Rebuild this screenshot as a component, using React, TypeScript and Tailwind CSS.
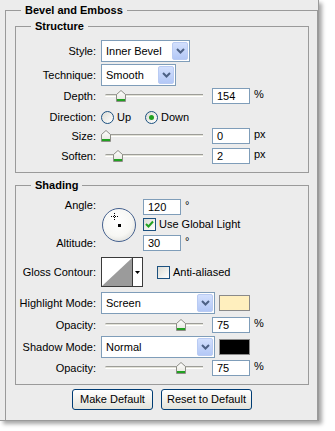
import React from "react";

const Chevron = () => (
  <svg width="9" height="6" viewBox="0 0 9 6">
    <path d="M1 1 L4.5 4.5 L8 1" fill="none" stroke="#4d6185" strokeWidth="2" />
  </svg>
);

function Select({ value, w }: { value: string; w: string }) {
  return (
    <div className={`${w} h-[22px] flex items-center border border-[#7f9db9] bg-white`}>
      <span className="flex-1 pl-[4px] pt-[1px] text-[11px] text-black">{value}</span>
      <span className="mr-[1px] flex h-[18px] w-[16px] items-center justify-center rounded-[2px] border border-[#b9cbf3] bg-gradient-to-b from-[#d3e0fd] to-[#b3c8f6]">
        <Chevron />
      </span>
    </div>
  );
}

function Field({ value, unit }: { value: string; unit: string }) {
  return (
    <div className="flex items-center">
      <div className="flex h-[16px] w-[38px] items-center border border-[#7f9db9] bg-white pl-[4px] text-[11px]">
        {value}
      </div>
      <span className="ml-[4px] -mt-[4px] text-[11px]">{unit}</span>
    </div>
  );
}

function Thumb() {
  return (
    <svg width="10" height="12" viewBox="0 0 10 12">
      <defs>
        <linearGradient id="tg" x1="0" y1="0" x2="0" y2="1">
          <stop offset="0" stopColor="#ffffff" />
          <stop offset="1" stopColor="#e4e4dc" />
        </linearGradient>
      </defs>
      <path d="M0.5 4.5 L5 0.5 L9.5 4.5 L9.5 11.5 L0.5 11.5 Z" fill="url(#tg)" stroke="#8d8d86" />
      <rect x="1" y="9" width="8" height="2" fill="#21a121" />
    </svg>
  );
}

function Slider({ at }: { at: number }) {
  return (
    <div className="relative h-[16px] w-[105px]">
      <div className="absolute left-[4px] right-[3px] top-[6px] h-[3px] rounded-l-full border-t border-[#9d9d98] border-b border-b-white bg-[#e2e2d8]" />
      <div className="absolute top-[2px]" style={{ left: at }}>
        <Thumb />
      </div>
    </div>
  );
}

function Label({ children }: { children: React.ReactNode }) {
  return <span className="w-[80px] shrink-0 text-right text-[11px]">{children}</span>;
}

function Row({ label, className, children }: { label: string; className: string; children: React.ReactNode }) {
  return (
    <div className={`flex items-center ${className}`}>
      <Label>{label}</Label>
      <div className="ml-[5px] flex items-center">{children}</div>
    </div>
  );
}

function SliderRow({ label, at, value, unit, className }: { label: string; at: number; value: string; unit: string; className: string }) {
  return (
    <Row label={label} className={`h-[16px] ${className}`}>
      <Slider at={at} />
      <div className="ml-[6px]">
        <Field value={value} unit={unit} />
      </div>
    </Row>
  );
}

function Radio({ on }: { on?: boolean }) {
  return (
    <span className="flex h-[13px] w-[13px] items-center justify-center rounded-full border border-[#1c5180] bg-gradient-to-br from-[#dcdcd5] to-white">
      {on && <span className="h-[5px] w-[5px] rounded-full bg-[#21a121]" />}
    </span>
  );
}

function Check({ on }: { on?: boolean }) {
  return (
    <span className="flex h-[13px] w-[13px] items-center justify-center border border-[#1c5180] bg-gradient-to-br from-[#dcdcd5] to-white">
      {on && (
        <svg width="9" height="9" viewBox="0 0 9 9">
          <path d="M1 4 L3.5 6.5 L8 1.5" fill="none" stroke="#21a121" strokeWidth="2" />
        </svg>
      )}
    </span>
  );
}

function Swatch({ color }: { color: string }) {
  return <span className={`ml-[4px] h-[16px] w-[31px] border border-[#8a8a8a] ${color}`} />;
}

function Button({ children, w }: { children: React.ReactNode; w: string }) {
  return (
    <button className={`${w} h-[21px] rounded-[3px] border border-[#003c74] bg-gradient-to-b from-white to-[#e3e3db] text-[11px] text-black`}>
      {children}
    </button>
  );
}

export default function App() {
  return (
    <div className="min-h-[431px] w-[335px] bg-white font-['Liberation_Sans',Arial,sans-serif] text-[11px] text-black">
      <div className="h-[421px] w-[319px] border-b border-r border-[#9a9a9a] bg-[#ececec] pl-[5px] pt-[3px] shadow-[3px_3px_4px_rgba(0,0,0,0.35)]">
        <fieldset className="w-[313px] border border-[#9a9a9a]">
          <legend className="ml-[15px] px-[4px] text-[11px] font-bold leading-[14px]">Bevel and Emboss</legend>
          <div className="pl-[9px] pr-[8px] pt-[2px]">
            {/* Structure */}
            <fieldset className="border border-[#9a9a9a]">
              <legend className="ml-[15px] px-[4px] text-[11px] font-bold leading-[14px]">Structure</legend>
              <div className="pb-[8px] pt-[7px]">
                <Row label="Style:" className="h-[22px]">
                  <Select value="Inner Bevel" w="w-[89px]" />
                </Row>
                <Row label="Technique:" className="mt-[2px] h-[22px]">
                  <Select value="Smooth" w="w-[75px]" />
                </Row>
                <SliderRow label="Depth:" at={15} value="154" unit="%" className="mt-[2px]" />
                <Row label="Direction:" className="mt-[6px] h-[14px]">
                  <Radio />
                  <span className="ml-[3px]">Up</span>
                  <span className="ml-[14px]">
                    <Radio on />
                  </span>
                  <span className="ml-[3px]">Down</span>
                </Row>
                <SliderRow label="Size:" at={0} value="0" unit="px" className="mt-[4px]" />
                <SliderRow label="Soften:" at={12} value="2" unit="px" className="mt-[4px]" />
              </div>
            </fieldset>

            {/* Shading */}
            <fieldset className="mt-[5px] border border-[#9a9a9a]">
              <legend className="ml-[15px] px-[4px] text-[11px] font-bold leading-[14px]">Shading</legend>
              <div className="pb-[8px] pt-[7px]">
                <div className="flex h-[52px]">
                  <div className="flex w-[80px] flex-col items-end">
                    <span className="leading-[12px]">Angle:</span>
                    <span className="mt-[26px] leading-[12px]">Altitude:</span>
                  </div>
                  <div className="relative ml-[6px] mt-[9px] h-[34px] w-[34px] rounded-full border-[1.5px] border-[#45618f] bg-[radial-gradient(circle_at_45%_40%,#ffffff_0%,#f7f7f4_55%,#cfcfcb_100%)]">
                    <svg className="absolute left-[8px] top-[4px]" width="7" height="7" viewBox="0 0 7 7">
                      <path d="M3.5 0 V7 M0 3.5 H7" stroke="#000" strokeWidth="1" strokeDasharray="1 1" />
                    </svg>
                    <span className="absolute left-[15px] top-[15px] h-[3px] w-[3px] bg-black" />
                  </div>
                  <div className="ml-[7px] flex flex-col">
                    <Field value="120" unit="°" />
                    <div className="mt-[3px] flex h-[13px] items-center">
                      <Check on />
                      <span className="ml-[3px]">Use Global Light</span>
                    </div>
                    <div className="mt-[4px]">
                      <Field value="30" unit="°" />
                    </div>
                  </div>
                </div>

                <Row label="Gloss Contour:" className="mt-[6px] h-[30px]">
                  <div className="flex h-[30px] w-[42px] border border-[#3a3a3a] bg-white">
                    <svg width="30" height="28" viewBox="0 0 30 28">
                      <polygon points="0,28 30,0 30,28" fill="#9b9b9b" />
                    </svg>
                    <div className="flex w-[10px] items-center justify-center border-l border-[#3a3a3a]">
                      <svg width="5" height="3" viewBox="0 0 5 3">
                        <polygon points="0,0 5,0 2.5,3" fill="#000" />
                      </svg>
                    </div>
                  </div>
                  <span className="ml-[14px]">
                    <Check />
                  </span>
                  <span className="ml-[3px]">Anti-aliased</span>
                </Row>

                <Row label="Highlight Mode:" className="mt-[5px] h-[22px]">
                  <Select value="Screen" w="w-[114px]" />
                  <Swatch color="bg-[#ffefbe]" />
                </Row>
                <SliderRow label="Opacity:" at={75} value="75" unit="%" className="mt-[3px]" />
                <Row label="Shadow Mode:" className="mt-[3px] h-[22px]">
                  <Select value="Normal" w="w-[114px]" />
                  <Swatch color="bg-black" />
                </Row>
                <SliderRow label="Opacity:" at={75} value="75" unit="%" className="mt-[2px]" />
              </div>
            </fieldset>

            <div className="mt-[4px] flex justify-center gap-[8px] pb-[10px]">
              <Button w="w-[81px]">Make Default</Button>
              <Button w="w-[91px]">Reset to Default</Button>
            </div>
          </div>
        </fieldset>
      </div>
    </div>
  );
}
